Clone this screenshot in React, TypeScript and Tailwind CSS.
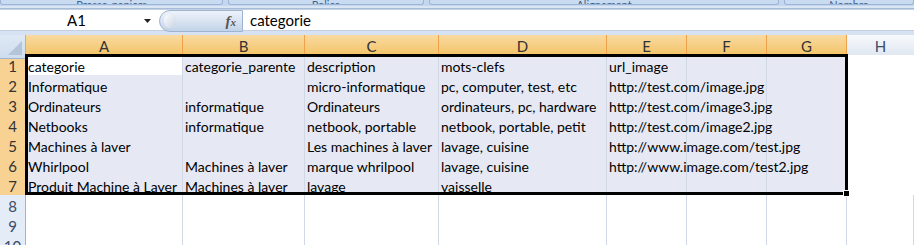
import React from 'react';

const cols = ['A', 'B', 'C', 'D', 'E', 'F', 'G', 'H'];

const rows: string[][] = [
  ['categorie', 'categorie_parente', 'description', 'mots-clefs', 'url_image', '', ''],
  ['Informatique', '', 'micro-informatique', 'pc, computer, test, etc', 'http://test.com/image.jpg', '', ''],
  ['Ordinateurs', 'informatique', 'Ordinateurs', 'ordinateurs, pc, hardware', 'http://test.com/image3.jpg', '', ''],
  ['Netbooks', 'informatique', 'netbook, portable', 'netbook, portable, petit', 'http://test.com/image2.jpg', '', ''],
  ['Machines à laver', '', 'Les machines à laver', 'lavage, cuisine', 'http://www.image.com/test.jpg', '', ''],
  ['Whirlpool', 'Machines à laver', 'marque whrilpool', 'lavage, cuisine', 'http://www.image.com/test2.jpg', '', ''],
  ['Produit Machine à Laver', 'Machines à laver', 'lavage', 'vaisselle', '', '', ''],
];

const groups = [
  { label: 'Presse-papiers', w: 'w-[223px]' },
  { label: 'Police', w: 'w-[196px]' },
  { label: 'Alignement', w: 'w-[350px]' },
  { label: 'Nombre', w: 'flex-1' },
];

const gridCols = 'grid grid-cols-[26px_157px_122px_134px_168px_80px_80px_80px_1fr]';

const App: React.FC = () => {
  return (
    <div className="w-[914px] h-[245px] overflow-hidden bg-[#d6e2f1] font-['Lato','Open_Sans',sans-serif] text-[14px] text-black relative">
      {/* ribbon groups, cut off */}
      <div className="h-[6px] flex gap-[5px] overflow-hidden bg-[#c4d7ee]">
        {groups.map(g => (
          <div key={g.label} className={`${g.w} h-[5px] bg-[#c9dbf1] border-b border-x border-[#9bb5d6] rounded-b-[3px] flex items-end justify-center overflow-hidden`}>
            <span className="text-[11px] leading-[11px] text-[#3e5f8a] translate-y-[6px]">{g.label}</span>
          </div>
        ))}
      </div>
      <div className="h-[3px] bg-[#dbe6f4] border-b border-[#a6bcd8]" />

      {/* formula bar */}
      <div className="h-[22px] flex bg-white border-y border-[#c3d0e2] text-[15px]">
        <div className="w-[159px] flex items-center relative">
          <span className="flex-1 text-center pr-[6px]">A1</span>
          <svg width="8" height="5" viewBox="0 0 8 5" className="absolute left-[144px] top-[9px]">
            <path d="M0 0 H7 L3.5 4 Z" fill="#222" />
          </svg>
        </div>
        <div className="w-[84px] h-[22px] rounded-l-full bg-gradient-to-b from-[#eef3fa] via-[#d9e4f2] to-[#c2d3e8] border border-[#9fb4d0] flex items-center justify-end pr-[6px] relative">
          <div className="absolute left-[4px] top-[3px] w-[12px] h-[14px] rounded-full bg-gradient-to-br from-white to-[#c8d4e4] opacity-90" />
          <span className="font-['Liberation_Serif',serif] italic font-bold text-[15px] text-[#555]">f<span className="text-[11px]">x</span></span>
        </div>
        <div className="flex-1 flex items-center pl-[7px]">categorie</div>
      </div>
      <div className="h-[4px] bg-[#d6e2f1]" />

      {/* sheet */}
      <div className="relative bg-white">
        <div className={`${gridCols} h-[20px]`}>
          <div className="bg-gradient-to-b from-[#dfe9f5] to-[#cfdcee] border-r border-b border-[#9eb6ce] relative overflow-hidden">
            <svg width="14" height="14" viewBox="0 0 14 14" className="absolute right-[3px] bottom-[3px]">
              <path d="M14 0 V14 H0 Z" fill="#b4c4d9" />
            </svg>
          </div>
          {cols.map(c => (
            <div
              key={c}
              className={
                c === 'H'
                  ? 'bg-gradient-to-b from-[#f7f9fc] to-[#dde5ef] border-b border-[#9eb6ce] flex items-center justify-center text-[#3c4d6b] text-[15px]'
                  : 'bg-gradient-to-b from-[#f9daa0] to-[#f2c15e] border-r border-b border-[#f0a24a] flex items-center justify-center text-[#333] text-[15px]'
              }
            >
              {c}
            </div>
          ))}
        </div>

        {rows.map((r, i) => (
          <div key={i} className={`${gridCols} h-[20px]`}>
            <div className="bg-[#f8d292] border-r border-b border-[#f1a54e] flex items-center justify-center text-[#333] text-[15px]">{i + 1}</div>
            {r.map((v, j) => (
              <div
                key={j}
                className={`${i === 0 && j === 0 ? 'bg-white' : 'bg-[#e6e9f4]'} border-r border-b border-[#d0d7e5] pl-[2px] whitespace-nowrap flex items-center min-w-0`}
              >
                {v && <span className="relative z-10">{v}</span>}
              </div>
            ))}
            <div className="bg-white border-b border-[#d0d7e5]" />
          </div>
        ))}

        {[8, 9, 10].map(n => (
          <div key={n} className={`${gridCols} h-[20px]`}>
            <div className="bg-[#e4ecf7] border-r border-b border-[#9eb6ce] flex items-center justify-center text-[#3c4d6b] text-[15px]">{n}</div>
            {cols.map(c => (
              <div key={c} className="bg-white border-r border-b border-[#d0d7e5]" />
            ))}
          </div>
        ))}

        {/* selection outline */}
        <div className="absolute z-20 left-[25px] top-[19px] w-[823px] h-[141px] border-[3px] border-black pointer-events-none" />
        <div className="absolute z-20 left-[843px] top-[155px] w-[7px] h-[7px] bg-black border border-white pointer-events-none" />
      </div>
    </div>
  );
};

export default App;
